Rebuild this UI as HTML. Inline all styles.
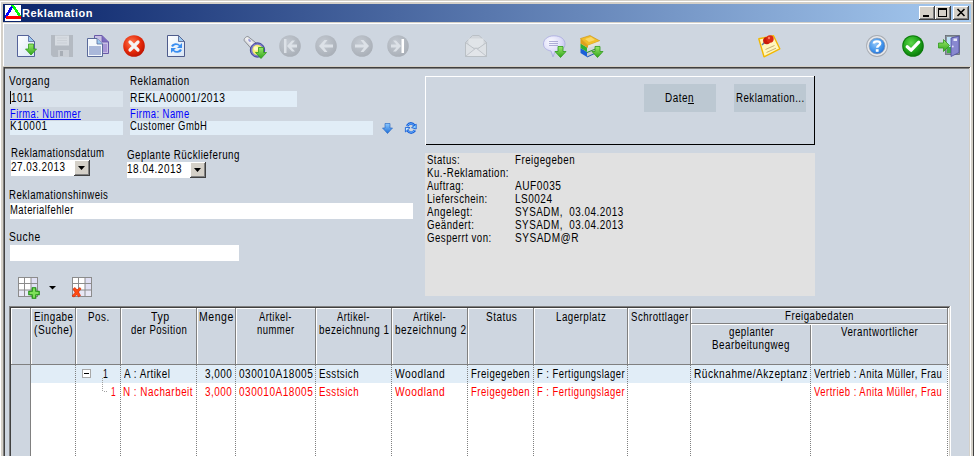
<!DOCTYPE html>
<html><head><meta charset="utf-8">
<style>
html,body{margin:0;padding:0;}
body{width:975px;height:457px;overflow:hidden;position:relative;background:#D4D0C8;font-family:"Liberation Sans",sans-serif;font-size:11px;color:#000;}
.a{position:absolute;}
.t{position:absolute;white-space:nowrap;font-size:12px;line-height:13px;letter-spacing:0.6px;transform:scaleX(0.88);transform-origin:0 0;}
.c{position:absolute;white-space:nowrap;font-size:12px;line-height:13px;text-align:center;transform:scaleX(0.88);transform-origin:50% 0;}
.r{color:#FF0000;}
svg{position:absolute;overflow:visible;}
.dv{position:absolute;width:1px;background:repeating-linear-gradient(to bottom,#808080 0,#808080 1px,transparent 1px,transparent 2px);}
</style></head><body>

<div class="a" style="left:0px;top:1px;width:973px;height:1px;background:#fff;"></div>
<div class="a" style="left:0px;top:1px;width:1px;height:456px;background:#fff;"></div>
<div class="a" style="left:973px;top:0px;width:1px;height:457px;background:#404040;"></div>
<div class="a" style="left:974px;top:0px;width:1px;height:457px;background:#fff;"></div>
<div class="a" style="left:3px;top:4px;width:968px;height:18px;background:linear-gradient(to right,#0A246A 0%,#A6CAF0 100%);"></div>
<svg style="left:5px;top:5px" width="16" height="16" viewBox="0 0 16 16" shape-rendering="crispEdges"><rect x="0" y="0" width="16" height="16" fill="#fff"/><rect x="6" y="1" width="3" height="1" fill="#0000FF"/><rect x="5" y="2" width="3" height="1" fill="#0000FF"/><rect x="4" y="3" width="3" height="1" fill="#0000FF"/><rect x="4" y="4" width="3" height="1" fill="#0000FF"/><rect x="3" y="5" width="3" height="1" fill="#0000FF"/><rect x="3" y="6" width="3" height="1" fill="#0000FF"/><rect x="2" y="7" width="3" height="1" fill="#0000FF"/><rect x="1" y="8" width="3" height="1" fill="#0000FF"/><rect x="1" y="9" width="3" height="1" fill="#0000FF"/><rect x="0" y="10" width="3" height="1" fill="#0000FF"/><rect x="0" y="11" width="3" height="1" fill="#0000FF"/><rect x="0" y="12" width="3" height="1" fill="#0000FF"/><rect x="6" y="0" width="3" height="1" fill="#00FF00"/><rect x="7" y="1" width="3" height="1" fill="#00FF00"/><rect x="8" y="2" width="3" height="1" fill="#00FF00"/><rect x="8" y="3" width="3" height="1" fill="#00FF00"/><rect x="9" y="4" width="3" height="1" fill="#00FF00"/><rect x="10" y="5" width="3" height="1" fill="#00FF00"/><rect x="10" y="6" width="3" height="1" fill="#00FF00"/><rect x="11" y="7" width="3" height="1" fill="#00FF00"/><rect x="12" y="8" width="3" height="1" fill="#00FF00"/><rect x="12" y="9" width="3" height="1" fill="#00FF00"/><rect x="13" y="10" width="3" height="1" fill="#00FF00"/><rect x="1" y="11" width="15" height="3" fill="#FF0000"/></svg>
<div class="t" style="left:22px;top:7px;color:#fff;font-weight:bold;font-size:11px;letter-spacing:0.5px;transform:none">Reklamation</div>
<div class="a" style="left:919px;top:6px;width:16px;height:14px;background:#D4D0C8;box-shadow:inset -1px -1px #404040,inset 1px 1px #fff,inset -2px -2px #808080,inset 2px 2px #D4D0C8"></div>
<div class="a" style="left:923px;top:15px;width:6px;height:2px;background:#000;"></div>
<div class="a" style="left:935px;top:6px;width:16px;height:14px;background:#D4D0C8;box-shadow:inset -1px -1px #404040,inset 1px 1px #fff,inset -2px -2px #808080,inset 2px 2px #D4D0C8"></div>
<div class="a" style="left:938px;top:8px;width:7px;height:6px;border:1px solid #000;border-top-width:2px"></div>
<div class="a" style="left:953px;top:6px;width:16px;height:14px;background:#D4D0C8;box-shadow:inset -1px -1px #404040,inset 1px 1px #fff,inset -2px -2px #808080,inset 2px 2px #D4D0C8"></div>
<svg style="left:957px;top:9px" width="8" height="7" viewBox="0 0 8 7"><path d="M0.5,0 L7.5,7 M7.5,0 L0.5,7" stroke="#000" stroke-width="1.6"/></svg>
<div class="a" style="left:3px;top:24px;width:968px;height:42px;background:#CED6E0;"></div>
<div class="a" style="left:3px;top:23px;width:968px;height:1px;background:#fff;"></div>
<div class="a" style="left:3px;top:23px;width:1px;height:43px;background:#fff;"></div>
<div class="a" style="left:3px;top:67px;width:968px;height:390px;background:#CED6E0;"></div>
<div class="a" style="left:3px;top:67px;width:968px;height:1px;background:#404040;"></div>
<div class="a" style="left:3px;top:68px;width:966px;height:1px;background:#808080;"></div>
<div class="a" style="left:3px;top:67px;width:1px;height:390px;background:#808080;"></div>
<div class="a" style="left:4px;top:68px;width:1px;height:389px;background:#404040;"></div>
<div class="a" style="left:969px;top:68px;width:1px;height:389px;background:#D4D0C8;"></div>
<div class="a" style="left:970px;top:67px;width:1px;height:390px;background:#fff;"></div>
<svg width="0" height="0" style="position:absolute"><defs>
<linearGradient id="gpage" x1="0" y1="0" x2="1" y2="1"><stop offset="0" stop-color="#ffffff"/><stop offset="1" stop-color="#D8E6F6"/></linearGradient>
<linearGradient id="ggreen" x1="0" y1="0" x2="0" y2="1"><stop offset="0" stop-color="#9BE86A"/><stop offset="1" stop-color="#2FA51A"/></linearGradient>
<radialGradient id="gred" cx="0.4" cy="0.35" r="0.7"><stop offset="0" stop-color="#FF7A50"/><stop offset="0.6" stop-color="#E52A0A"/><stop offset="1" stop-color="#B81000"/></radialGradient>
<radialGradient id="ggrn" cx="0.4" cy="0.35" r="0.7"><stop offset="0" stop-color="#5ED84A"/><stop offset="0.6" stop-color="#1FA51A"/><stop offset="1" stop-color="#0B7A0B"/></radialGradient>
<radialGradient id="gblue" cx="0.4" cy="0.35" r="0.7"><stop offset="0" stop-color="#8EC4F8"/><stop offset="0.7" stop-color="#3A8EE8"/><stop offset="1" stop-color="#2A6ED0"/></radialGradient>
<radialGradient id="ggray" cx="0.4" cy="0.35" r="0.7"><stop offset="0" stop-color="#C4CAD2"/><stop offset="1" stop-color="#A8AEB6"/></radialGradient>
<linearGradient id="gblu2" x1="0" y1="0" x2="0" y2="1"><stop offset="0" stop-color="#8AC8FF"/><stop offset="1" stop-color="#1F6FD8"/></linearGradient>
</defs></svg>
<svg style="left:17px;top:35px" width="22" height="22" viewBox="0 0 22 22"><path d="M0.5,0.5 H11.5 L17.5,6.5 V21.5 H0.5 Z" fill="url(#gpage)" stroke="#55639A"/><path d="M11.5,0.5 V6.5 H17.5 Z" fill="#9CCAF0" stroke="#55639A" stroke-width="0.8"/><path transform="translate(8.5,9)" d="M3,0 H8 V5 H11 L5.5,11 L0,5 H3 Z" fill="url(#ggreen)" stroke="#2E9B1C" stroke-width="0.8"/></svg>
<svg style="left:51px;top:35px" width="23" height="23" viewBox="0 0 23 23"><path d="M0,0 H22 V22 H2 L0,20 Z" fill="#B4BAC2"/><rect x="4" y="0.5" width="14" height="10" fill="#D6DBE1"/><path d="M6,3 H16 M6,5.5 H16 M6,8 H16" stroke="#C8CDD3" stroke-width="0.8"/><rect x="7" y="15" width="11" height="7" fill="#C9CED5"/><rect x="9" y="16" width="3" height="5" fill="#A8AEB6"/></svg>
<svg style="left:87px;top:35px" width="23" height="23" viewBox="0 0 23 23"><path d="M7.5,0.5 H15 L21.5,7 V18.5 H7.5 Z" fill="#C8C0E4" stroke="#6A5AA8"/><path d="M15,0.5 V7 H21.5" fill="#7C6CC0" stroke="#6A5AA8" stroke-width="0.8"/><rect x="10" y="9" width="10" height="8" fill="#A896D6"/><path d="M0.5,3.5 H10 L15.5,9 V21.5 H0.5 Z" fill="#F4F8FC" stroke="#5A6A9A"/><path d="M10,3.5 V9 H15.5" fill="#9CCAF0" stroke="#5A6A9A" stroke-width="0.8"/><rect x="2" y="11" width="12" height="9" fill="#AAB8DA"/></svg>
<svg style="left:123px;top:35px" width="22" height="22" viewBox="0 0 22 22"><circle cx="11" cy="11" r="10.8" fill="url(#gred)"/><path d="M7,7 L15,15 M15,7 L7,15" stroke="#F4F4F4" stroke-width="3.2" stroke-linecap="round"/></svg>
<svg style="left:167px;top:35px" width="19" height="22" viewBox="0 0 19 22"><path d="M0.5,0.5 H11.5 L17.5,6.5 V21.5 H0.5 Z" fill="url(#gpage)" stroke="#4E5C8C"/><path d="M11.5,0.5 V6.5 H17.5 Z" fill="#9CCAF0" stroke="#4E5C8C" stroke-width="0.8"/><path d="M4,11 A5,4 0 0 1 13,10 L15,8 V13 H10 L12,11 A3.5,3 0 0 0 6,12 Z" fill="#3A8EF0"/><path d="M15,15 A5,4 0 0 1 6,16 L4,18 V13 H9 L7,15 A3.5,3 0 0 0 13,14 Z" fill="#3A8EF0"/></svg>
<svg style="left:243px;top:35px" width="24" height="24" viewBox="0 0 24 24"><linearGradient id="gfl" x1="0" y1="1" x2="1" y2="0"><stop offset="0" stop-color="#8A8E94"/><stop offset="0.5" stop-color="#F4F4F6"/><stop offset="1" stop-color="#A0A4AA"/></linearGradient><path d="M1.5,6 C0,4.5 3,1 5,1.5 L15,9.5 L9.5,15 Z" fill="url(#gfl)" stroke="#7C8086" stroke-width="0.8"/><ellipse cx="6.5" cy="5.5" rx="1.6" ry="1" fill="#9A9AD8" transform="rotate(45 6.5 5.5)"/><circle cx="14.5" cy="15" r="7.2" fill="#7C7CC8" stroke="#2A2A8A" stroke-width="0.8"/><circle cx="14.5" cy="15" r="5.2" fill="#F4EE70"/><circle cx="13" cy="13.5" r="2.2" fill="#FFFBC8"/><path transform="translate(12.5,12.5)" d="M3,0 H8 V5 H11 L5.5,11 L0,5 H3 Z" fill="url(#ggreen)" stroke="#2E9B1C" stroke-width="0.8"/></svg>
<svg style="left:279px;top:35px" width="22" height="22" viewBox="0 0 22 22"><circle cx="11" cy="11" r="10.8" fill="url(#ggray)"/><path d="M5,4 H7.5 V18 H5 Z" fill="#DCE1E7"/><path d="M8,11 L13,5.5 H16 L12.5,9.5 H18 V12.5 H12.5 L16,16.5 H13 Z" fill="#DCE1E7"/></svg>
<svg style="left:315px;top:35px" width="22" height="22" viewBox="0 0 22 22"><circle cx="11" cy="11" r="10.8" fill="url(#ggray)"/><path d="M4,11 L9.5,5 H12.5 L9,9.5 H18 V12.5 H9 L12.5,17 H9.5 Z" fill="#DCE1E7"/></svg>
<svg style="left:351px;top:35px" width="22" height="22" viewBox="0 0 22 22"><circle cx="11" cy="11" r="10.8" fill="url(#ggray)"/><path d="M18,11 L12.5,5 H9.5 L13,9.5 H4 V12.5 H13 L9.5,17 H12.5 Z" fill="#DCE1E7"/></svg>
<svg style="left:387px;top:35px" width="22" height="22" viewBox="0 0 22 22"><circle cx="11" cy="11" r="10.8" fill="url(#ggray)"/><path d="M14.5,4 H17 V18 H14.5 Z" fill="#fff"/><path d="M14,11 L9,5.5 H6 L9.5,9.5 H4 V12.5 H9.5 L6,16.5 H9 Z" fill="#DCE1E7"/></svg>
<svg style="left:465px;top:35px" width="23" height="23" viewBox="0 0 23 23"><path d="M0.5,7.5 L7.5,0.5 H14 L21.5,7.5 V21.5 H0.5 Z" fill="#D2D6DB" stroke="#B8BDC3" stroke-width="0.9"/><rect x="3.5" y="3.5" width="15" height="9" fill="#E0E4E8"/><path d="M0.5,7.5 L11,15 L21.5,7.5 V21.5 H0.5 Z" fill="#DDE1E5" stroke="#B8BDC3" stroke-width="0.9"/><path d="M1,21 L11,13 L21,21" fill="#E2E5E9" stroke="#BCC1C7" stroke-width="0.9"/></svg>
<svg style="left:543px;top:35px" width="24" height="23" viewBox="0 0 24 23"><radialGradient id="gbub" cx="0.35" cy="0.3" r="0.8"><stop offset="0" stop-color="#FAFAFF"/><stop offset="0.6" stop-color="#DCDCF8"/><stop offset="1" stop-color="#B8B8E8"/></radialGradient><path d="M11,0.8 C18,0.8 22,4.5 22,9 C22,13.5 18,16.5 12,16.5 L10,22 L8,16 C3,15 0.5,12.5 0.5,9 C0.5,4.5 4.5,0.8 11,0.8 Z" fill="url(#gbub)" stroke="#A8A8E0" stroke-width="0.8"/><path d="M6,6.5 H15 M6,8.5 H15 M6,10.5 H15" stroke="#9C9CCC" stroke-width="0.8"/><path transform="translate(12,11.5)" d="M3,0 H8 V5 H11 L5.5,11 L0,5 H3 Z" fill="url(#ggreen)" stroke="#2E9B1C" stroke-width="0.8"/></svg>
<svg style="left:580px;top:35px" width="23" height="23" viewBox="0 0 23 23"><path d="M0.5,13 L7,17 V22 L0.5,18 Z" fill="#1A5FD8"/><path d="M7,17 L19,12 V16 L7,21.5 Z" fill="#C4C8CE"/><path d="M7,21.5 L19,16 V17 L7,22.5 Z" fill="#1A50B0"/><path d="M0.5,8.5 L7,12.5 V17 L0.5,13 Z" fill="#30B030"/><path d="M7,12.5 L19,8 V12 L7,17 Z" fill="#D4D8DC"/><path d="M7,17 L19,12 V13 L7,18 Z" fill="#2A902A"/><path d="M0.5,3.5 L10,0.5 L20,6 L8,10.5 Z" fill="#F2BE28" stroke="#C89010" stroke-width="0.6"/><path d="M0.5,3.5 L8,10.5 V13 L0.5,8.5 Z" fill="#E0A018"/><path d="M8,10.5 L20,6 V9 L8,13 Z" fill="#E4E4DC"/><path d="M5,4 L11,2 L15,5 L9,7 Z" fill="#F8D868"/><path transform="translate(12,11.5)" d="M3,0 H8 V5 H11 L5.5,11 L0,5 H3 Z" fill="url(#ggreen)" stroke="#2E9B1C" stroke-width="0.8"/></svg>
<svg style="left:758px;top:35px" width="23" height="23" viewBox="0 0 23 23"><path d="M0.8,3.8 L15.5,0.8 L21.8,13.8 L6,21.8 Z" fill="#FFF6BC" stroke="#F2B800" stroke-width="1.4" stroke-linejoin="round"/><path d="M7.5,14.5 L16.5,10.5 M8.5,17.5 L18,13.2" stroke="#C8B070" stroke-width="1"/><path d="M4,10 L6.5,7.5" stroke="#5A7A9A" stroke-width="1.4"/><circle cx="8.8" cy="5.6" r="3.7" fill="#C81A0A"/><circle cx="12" cy="4" r="3.7" fill="#DC2A14"/><circle cx="11" cy="3" r="1.2" fill="#FF7A5A"/></svg>
<svg style="left:866px;top:35px" width="22" height="22" viewBox="0 0 22 22"><circle cx="11" cy="11" r="10.9" fill="#A8ACB2"/><circle cx="11" cy="11" r="10" fill="#E6E8EC"/><circle cx="11" cy="11" r="8" fill="url(#gblue)" stroke="#9A9EA6" stroke-width="0.6"/><path d="M7.8,8.5 C7.8,5.6 14.2,5.6 14.2,8.5 C14.2,10.6 11.2,10.4 11.2,12.8" stroke="#fff" stroke-width="2.4" fill="none"/><rect x="9.8" y="14.2" width="2.8" height="2.6" fill="#fff"/></svg>
<svg style="left:902px;top:35px" width="22" height="22" viewBox="0 0 22 22"><circle cx="11" cy="11" r="10.8" fill="#0A7A0A"/><circle cx="11" cy="11" r="9.8" fill="url(#ggrn)"/><path d="M5.2,11.8 L9.2,15.2 L16.8,7.2" stroke="#fff" stroke-width="3.2" fill="none" stroke-linecap="round" stroke-linejoin="round"/></svg>
<svg style="left:938px;top:35px" width="23" height="23" viewBox="0 0 23 23"><rect x="7.5" y="0.5" width="14" height="19" fill="#8C949C" stroke="#646C74" stroke-width="0.8"/><rect x="9" y="2" width="5" height="16" fill="#BFE4F8"/><rect x="9" y="12" width="5" height="6" fill="#40B040"/><path d="M13,3 L21,1 V17.5 L13,21.5 Z" fill="#8888D0" stroke="#4C4CA0" stroke-width="0.8"/><rect x="15.5" y="3.5" width="3.5" height="2.5" fill="#E8E8FA"/><circle cx="14.8" cy="11.5" r="0.9" fill="#E0E0F8"/><path d="M0.5,8 H5.5 V4.5 L11.5,10.5 L5.5,16.5 V13 H0.5 Z" fill="url(#ggreen)" stroke="#2E9B1C" stroke-width="0.8"/></svg>
<svg style="left:382px;top:123px" width="11" height="11" viewBox="0 0 11 11"><path d="M3,0.5 H8 V5 H10.5 L5.5,10.5 L0.5,5 H3 Z" fill="url(#gblu2)" stroke="#1F5FC0" stroke-width="0.6"/></svg>
<svg style="left:402px;top:119px" width="18" height="18" viewBox="0 0 18 18"><path d="M5,7 Q8.8,1.8 12.8,6.8" stroke="#1A62D8" stroke-width="2.6" fill="none"/><path d="M5.3,6.6 Q8.8,2.8 12.4,6.6" stroke="#6EB4FF" stroke-width="1" fill="none"/><path d="M9.6,8.6 L14.2,5.2 V10 Z" fill="#8CD0FF" stroke="#1A62D8" stroke-width="0.9"/><path d="M13,11.2 Q9.2,16.2 5.2,11.2" stroke="#1A62D8" stroke-width="2.6" fill="none"/><path d="M12.6,11.4 Q9.2,15.2 5.6,11.4" stroke="#6EB4FF" stroke-width="1" fill="none"/><path d="M8,8.6 L3.4,8.4 V13 Z" fill="#C4E8FF" stroke="#1A62D8" stroke-width="0.9"/></svg>
<svg style="left:18px;top:277px" width="20" height="20" viewBox="0 0 20 20"><rect x="0.5" y="0.5" width="19" height="19" fill="#fff" stroke="#8C8C8C"/><rect x="13" y="1" width="6" height="18" fill="#E0E0F4"/><rect x="1" y="13" width="18" height="6" fill="#E8E8F6"/><path d="M6.5,0.5 V19.5 M13,0.5 V19.5 M0.5,6.5 H19.5 M0.5,13 H19.5" stroke="#8C8C8C" stroke-width="1"/><path d="M14.2,10.8 H17.8 V14.2 H21.2 V17.8 H17.8 V21.2 H14.2 V17.8 H10.8 V14.2 H14.2 Z" fill="#7EE05A" stroke="#188A0C" stroke-width="1.1" stroke-linejoin="round"/></svg>
<svg style="left:49px;top:286px" width="7" height="4" viewBox="0 0 7 4"><path d="M0,0 H7 L3.5,3.5 Z" fill="#000"/></svg>
<svg style="left:72px;top:277px" width="20" height="20" viewBox="0 0 20 20"><rect x="0.5" y="0.5" width="19" height="19" fill="#fff" stroke="#8C8C8C"/><rect x="13" y="1" width="6" height="18" fill="#E0E0F4"/><rect x="1" y="13" width="18" height="6" fill="#E8E8F6"/><path d="M6.5,0.5 V19.5 M13,0.5 V19.5 M0.5,6.5 H19.5 M0.5,13 H19.5" stroke="#8C8C8C" stroke-width="1"/><path d="M1,12 L3,10.5 L5,13 L8,10.5 L9,12 L6.5,15 L8.5,18.5 L6.5,20 L5,17.5 L2,20 L0,19 L3,15.5 Z" fill="#FF4A10" stroke="#D02000" stroke-width="0.6"/></svg>
<div class="t" style="left:8.93px;top:75px;transform:scaleX(0.8385);">Vorgang</div>
<div class="t" style="left:129.98px;top:75px;transform:scaleX(0.8143);">Reklamation</div>
<div class="a" style="left:10px;top:91px;width:113px;height:16px;background:#DAE3EC;"></div>
<div class="a" style="left:10px;top:91px;width:1px;height:13px;background:#000;"></div>
<div class="t" style="left:10.61px;top:92px;transform:scaleX(0.8145);">1011</div>
<div class="a" style="left:130px;top:91px;width:167px;height:16px;background:#E1EDF7;"></div>
<div class="t" style="left:129.94px;top:92px;transform:scaleX(0.8546);">REKLA00001/2013</div>
<div class="t" style="left:9.61px;top:108px;transform:scaleX(0.7788);color:#0000FF;text-decoration:underline">Firma: Nummer</div>
<div class="t" style="left:130.00px;top:108px;transform:scaleX(0.7855);color:#0000FF">Firma: Name</div>
<div class="a" style="left:10px;top:121px;width:113px;height:14px;background:#E1EDF7;"></div>
<div class="t" style="left:9.56px;top:120px;transform:scaleX(0.8358);">K10001</div>
<div class="a" style="left:130px;top:121px;width:243px;height:14px;background:#E1EDF7;"></div>
<div class="t" style="left:130.18px;top:120px;transform:scaleX(0.7913);">Customer GmbH</div>
<div class="t" style="left:11.29px;top:147px;transform:scaleX(0.8052);">Reklamationsdatum</div>
<div class="a" style="left:11px;top:160px;width:63px;height:16px;background:#fff;"></div>
<div class="t" style="left:11.16px;top:161px;transform:scaleX(0.8239);">27.03.2013</div>
<div class="a" style="left:74px;top:160px;width:16px;height:16px;background:#D4D0C8;box-shadow:inset -1px -1px #404040,inset 1px 1px #fff,inset -2px -2px #808080,inset 2px 2px #D4D0C8"></div>
<svg style="left:78px;top:166px" width="7" height="4" viewBox="0 0 7 4"><path d="M0,0 H7 L3.5,4 Z" fill="#000"/></svg>
<div class="t" style="left:127.16px;top:149px;transform:scaleX(0.8148);">Geplante Rücklieferung</div>
<div class="a" style="left:127px;top:162px;width:63px;height:16px;background:#fff;"></div>
<div class="t" style="left:126.99px;top:163px;transform:scaleX(0.8342);">18.04.2013</div>
<div class="a" style="left:190px;top:162px;width:16px;height:16px;background:#D4D0C8;box-shadow:inset -1px -1px #404040,inset 1px 1px #fff,inset -2px -2px #808080,inset 2px 2px #D4D0C8"></div>
<svg style="left:194px;top:168px" width="7" height="4" viewBox="0 0 7 4"><path d="M0,0 H7 L3.5,4 Z" fill="#000"/></svg>
<div class="t" style="left:9.09px;top:189px;transform:scaleX(0.8006);">Reklamationshinweis</div>
<div class="a" style="left:10px;top:203px;width:403px;height:16px;background:#fff;"></div>
<div class="t" style="left:9.60px;top:204px;transform:scaleX(0.7862);">Materialfehler</div>
<div class="t" style="left:9.12px;top:231px;transform:scaleX(0.8555);">Suche</div>
<div class="a" style="left:10px;top:245px;width:229px;height:16px;background:#fff;"></div>
<div class="a" style="left:425px;top:76px;width:389px;height:1px;background:#fff;"></div>
<div class="a" style="left:425px;top:76px;width:1px;height:69px;background:#fff;"></div>
<div class="a" style="left:814px;top:76px;width:1px;height:69px;background:#000;"></div>
<div class="a" style="left:426px;top:144px;width:389px;height:1px;background:#000;"></div>
<div class="a" style="left:644px;top:84px;width:72px;height:28px;background:#BCC8D2;"></div>
<div class="t" style="left:665.07px;top:92px;transform:scaleX(0.8266);">Date<u>n</u></div>
<div class="a" style="left:734px;top:84px;width:72px;height:28px;background:#BCC8D2;"></div>
<div class="t" style="left:736.08px;top:92px;transform:scaleX(0.8070);">Reklamation...</div>
<div class="a" style="left:425px;top:153px;width:390px;height:143px;background:#E1E1E1;"></div>
<div class="t" style="left:426.96px;top:154px;transform:scaleX(0.7971);">Status:</div>
<div class="t" style="left:515.08px;top:154px;transform:scaleX(0.8123);">Freigegeben</div>
<div class="t" style="left:426.88px;top:167px;transform:scaleX(0.8069);">Ku.-Reklamation:</div>
<div class="t" style="left:427.34px;top:180px;transform:scaleX(0.7931);">Auftrag:</div>
<div class="t" style="left:514.83px;top:180px;transform:scaleX(0.8458);">AUF0035</div>
<div class="t" style="left:426.89px;top:193px;transform:scaleX(0.7992);">Lieferschein:</div>
<div class="t" style="left:515.06px;top:193px;transform:scaleX(0.8332);">LS0024</div>
<div class="t" style="left:427.34px;top:206px;transform:scaleX(0.8185);">Angelegt:</div>
<div class="t" style="left:515.14px;top:206px;transform:scaleX(0.8227);">SYSADM,&nbsp; 03.04.2013</div>
<div class="t" style="left:427.07px;top:219px;transform:scaleX(0.8054);">Geändert:</div>
<div class="t" style="left:515.14px;top:219px;transform:scaleX(0.8227);">SYSADM,&nbsp; 03.04.2013</div>
<div class="t" style="left:427.07px;top:232px;transform:scaleX(0.8035);">Gesperrt von:</div>
<div class="t" style="left:515.13px;top:232px;transform:scaleX(0.8385);">SYSADM@R</div>
<div class="a" style="left:9px;top:306px;width:941px;height:1px;background:#808080;"></div>
<div class="a" style="left:10px;top:307px;width:939px;height:1px;background:#404040;"></div>
<div class="a" style="left:9px;top:306px;width:1px;height:151px;background:#808080;"></div>
<div class="a" style="left:10px;top:307px;width:1px;height:150px;background:#404040;"></div>
<div class="a" style="left:948px;top:308px;width:1px;height:149px;background:#fff;"></div>
<div class="a" style="left:949px;top:307px;width:1px;height:150px;background:#D4D0C8;"></div>
<div class="a" style="left:950px;top:306px;width:1px;height:151px;background:#fff;"></div>
<div class="a" style="left:11px;top:308px;width:937px;height:56px;background:#CED6E0;"></div>
<div class="a" style="left:11px;top:308px;width:937px;height:1px;background:#fff;"></div>
<div class="a" style="left:11px;top:309px;width:1px;height:55px;background:#fff;"></div>
<div class="a" style="left:30px;top:308px;width:1px;height:56px;background:#808080;"></div>
<div class="a" style="left:31px;top:309px;width:1px;height:55px;background:#fff;"></div>
<div class="a" style="left:75px;top:308px;width:1px;height:56px;background:#808080;"></div>
<div class="a" style="left:76px;top:309px;width:1px;height:55px;background:#fff;"></div>
<div class="a" style="left:120px;top:308px;width:1px;height:56px;background:#808080;"></div>
<div class="a" style="left:121px;top:309px;width:1px;height:55px;background:#fff;"></div>
<div class="a" style="left:196px;top:308px;width:1px;height:56px;background:#808080;"></div>
<div class="a" style="left:197px;top:309px;width:1px;height:55px;background:#fff;"></div>
<div class="a" style="left:235px;top:308px;width:1px;height:56px;background:#808080;"></div>
<div class="a" style="left:236px;top:309px;width:1px;height:55px;background:#fff;"></div>
<div class="a" style="left:315px;top:308px;width:1px;height:56px;background:#808080;"></div>
<div class="a" style="left:316px;top:309px;width:1px;height:55px;background:#fff;"></div>
<div class="a" style="left:391px;top:308px;width:1px;height:56px;background:#808080;"></div>
<div class="a" style="left:392px;top:309px;width:1px;height:55px;background:#fff;"></div>
<div class="a" style="left:467px;top:308px;width:1px;height:56px;background:#808080;"></div>
<div class="a" style="left:468px;top:309px;width:1px;height:55px;background:#fff;"></div>
<div class="a" style="left:533px;top:308px;width:1px;height:56px;background:#808080;"></div>
<div class="a" style="left:534px;top:309px;width:1px;height:55px;background:#fff;"></div>
<div class="a" style="left:627px;top:308px;width:1px;height:56px;background:#808080;"></div>
<div class="a" style="left:628px;top:309px;width:1px;height:55px;background:#fff;"></div>
<div class="a" style="left:690px;top:308px;width:1px;height:56px;background:#808080;"></div>
<div class="a" style="left:691px;top:309px;width:1px;height:55px;background:#fff;"></div>
<div class="a" style="left:810px;top:324px;width:1px;height:40px;background:#808080;"></div>
<div class="a" style="left:811px;top:325px;width:1px;height:39px;background:#fff;"></div>
<div class="a" style="left:947px;top:308px;width:1px;height:56px;background:#808080;"></div>
<div class="a" style="left:691px;top:323px;width:257px;height:1px;background:#808080;"></div>
<div class="a" style="left:691px;top:324px;width:256px;height:1px;background:#fff;"></div>
<div class="a" style="left:11px;top:364px;width:938px;height:1px;background:#808080;"></div>
<div class="a" style="left:11px;top:365px;width:19px;height:92px;background:#CED6E0;"></div>
<div class="a" style="left:30px;top:365px;width:1px;height:92px;background:#808080;"></div>
<div class="a" style="left:31px;top:365px;width:917px;height:92px;background:#fff;"></div>
<div class="a" style="left:31px;top:365px;width:916px;height:18px;background:#E1EDF7;"></div>
<div class="dv" style="left:75px;top:365px;height:92px"></div>
<div class="dv" style="left:120px;top:365px;height:92px"></div>
<div class="dv" style="left:196px;top:365px;height:92px"></div>
<div class="dv" style="left:235px;top:365px;height:92px"></div>
<div class="dv" style="left:315px;top:365px;height:92px"></div>
<div class="dv" style="left:391px;top:365px;height:92px"></div>
<div class="dv" style="left:467px;top:365px;height:92px"></div>
<div class="dv" style="left:533px;top:365px;height:92px"></div>
<div class="dv" style="left:627px;top:365px;height:92px"></div>
<div class="dv" style="left:690px;top:365px;height:92px"></div>
<div class="dv" style="left:810px;top:365px;height:92px"></div>
<div class="dv" style="left:947px;top:365px;height:92px"></div>
<div class="t" style="left:34.37px;top:311px;transform:scaleX(0.8197);">Eingabe</div>
<div class="t" style="left:34.45px;top:324px;transform:scaleX(0.8490);">(Suche)</div>
<div class="t" style="left:88.18px;top:311px;transform:scaleX(0.8177);">Pos.</div>
<div class="t" style="left:150.71px;top:311px;transform:scaleX(0.8844);">Typ</div>
<div class="t" style="left:131.04px;top:324px;transform:scaleX(0.7977);">der Position</div>
<div class="t" style="left:199.42px;top:311px;transform:scaleX(0.8761);">Menge</div>
<div class="t" style="left:259.45px;top:311px;transform:scaleX(0.7790);">Artikel-</div>
<div class="t" style="left:257.07px;top:324px;transform:scaleX(0.7897);">nummer</div>
<div class="t" style="left:337.45px;top:311px;transform:scaleX(0.7790);">Artikel-</div>
<div class="t" style="left:318.97px;top:324px;transform:scaleX(0.8201);">bezeichnung 1</div>
<div class="t" style="left:413.35px;top:311px;transform:scaleX(0.7888);">Artikel-</div>
<div class="t" style="left:395.06px;top:324px;transform:scaleX(0.8322);">bezeichnung 2</div>
<div class="t" style="left:485.73px;top:311px;transform:scaleX(0.8330);">Status</div>
<div class="t" style="left:555.88px;top:311px;transform:scaleX(0.8102);">Lagerplatz</div>
<div class="t" style="left:630.96px;top:311px;transform:scaleX(0.8013);">Schrottlager</div>
<div class="t" style="left:784.98px;top:310px;transform:scaleX(0.8098);">Freigabedaten</div>
<div class="t" style="left:729.03px;top:326px;transform:scaleX(0.8125);">geplanter</div>
<div class="t" style="left:712.07px;top:339px;transform:scaleX(0.8192);">Bearbeitungweg</div>
<div class="t" style="left:840.54px;top:326px;transform:scaleX(0.8080);">Verantwortlicher</div>
<div class="a" style="left:82px;top:369px;width:9px;height:9px;background:#fff;box-sizing:border-box;border:1px solid #A8A8A8"></div>
<div class="a" style="left:84px;top:373px;width:5px;height:1px;background:#000;"></div>
<div class="a" style="left:102px;top:378px;width:1px;height:13px;background:repeating-linear-gradient(to bottom,#A0A0A0 0,#A0A0A0 1px,transparent 1px,transparent 2px)"></div>
<div class="a" style="left:104px;top:391px;width:1px;height:1px;background:#A0A0A0;"></div>
<div class="a" style="left:106px;top:391px;width:1px;height:1px;background:#A0A0A0;"></div>
<div class="t" style="left:103.08px;top:368px;transform:scaleX(0.7227);">1</div>
<div class="t" style="left:123.74px;top:368px;transform:scaleX(0.8193);">A : Artikel</div>
<div class="t" style="left:205.13px;top:368px;transform:scaleX(0.8298);">3,000</div>
<div class="t" style="left:238.55px;top:368px;transform:scaleX(0.8377);">030010A18005</div>
<div class="t" style="left:319.08px;top:368px;transform:scaleX(0.8103);">Esstsich</div>
<div class="t" style="left:395.46px;top:368px;transform:scaleX(0.8548);">Woodland</div>
<div class="t" style="left:471.29px;top:368px;transform:scaleX(0.7998);">Freigegeben</div>
<div class="t" style="left:536.60px;top:368px;transform:scaleX(0.7855);">F : Fertigungslager</div>
<div class="t" style="left:694.05px;top:368px;transform:scaleX(0.8447);">Rücknahme/Akzeptanz</div>
<div class="t" style="left:813.94px;top:368px;transform:scaleX(0.7915);">Vertrieb : Anita Müller, Frau</div>
<div class="t" style="left:111.20px;top:386px;transform:scaleX(0.7000);color:#FF0000">1</div>
<div class="t" style="left:123.27px;top:386px;transform:scaleX(0.8231);color:#FF0000">N : Nacharbeit</div>
<div class="t" style="left:205.13px;top:386px;transform:scaleX(0.8298);color:#FF0000">3,000</div>
<div class="t" style="left:238.55px;top:386px;transform:scaleX(0.8377);color:#FF0000">030010A18005</div>
<div class="t" style="left:319.08px;top:386px;transform:scaleX(0.8103);color:#FF0000">Esstsich</div>
<div class="t" style="left:395.46px;top:386px;transform:scaleX(0.8548);color:#FF0000">Woodland</div>
<div class="t" style="left:471.29px;top:386px;transform:scaleX(0.7998);color:#FF0000">Freigegeben</div>
<div class="t" style="left:536.60px;top:386px;transform:scaleX(0.7855);color:#FF0000">F : Fertigungslager</div>
<div class="t" style="left:813.94px;top:386px;transform:scaleX(0.7915);color:#FF0000">Vertrieb : Anita Müller, Frau</div>
<div class="a" style="left:0px;top:456px;width:975px;height:1px;background:#fff;"></div>
</body></html>
